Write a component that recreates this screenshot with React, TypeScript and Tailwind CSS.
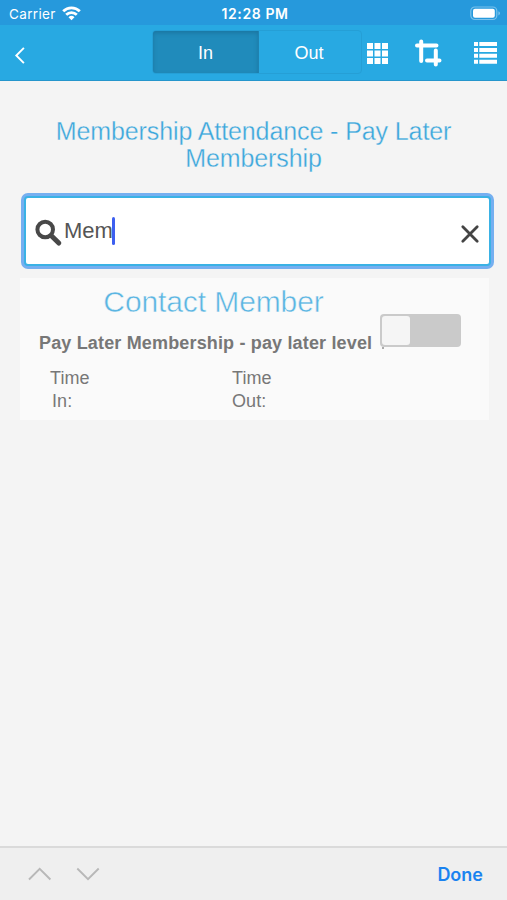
import type { ReactNode } from 'react'

function StatusBar() {
  return (
    <div className="grid h-[25px] grid-cols-3 items-center bg-[#2699dc] pr-[6px] pl-[9px] text-white">
      <div className="flex items-center gap-[6px] pt-[2px]">
        <span className="font-['Inter',sans-serif] text-[13.5px] leading-4 tracking-[0.35px]">Carrier</span>
        <svg width="19" height="15" viewBox="0 0 19 15" fill="none" stroke="currentColor" strokeWidth="2.8">
          <path d="M1.2 5.2a11.8 11.8 0 0 1 16.6 0" />
          <path d="M4.2 8.7a7.6 7.6 0 0 1 10.6 0" />
          <path d="M9.5 14.2 6.5 11.2a4.3 4.3 0 0 1 6 0z" fill="currentColor" stroke="none" />
        </svg>
      </div>
      <span className="pt-[2px] text-center font-['Inter',sans-serif] text-[14px] leading-4 font-semibold tracking-[0.6px] whitespace-nowrap">
        12:28 PM
      </span>
      <div className="flex justify-end pt-[1px]">
        <svg width="31" height="15" viewBox="0 0 31 15" fill="none">
          <rect x="0.8" y="1" width="26" height="12.5" rx="4" stroke="#79c2ec" strokeWidth="1.2" />
          <rect x="3" y="2.8" width="21.8" height="9" rx="2" fill="#fff" />
          <path d="M28.4 5.2v4.2q1.6-.6 1.6-2.1t-1.6-2.1z" fill="#79c2ec" />
        </svg>
      </div>
    </div>
  )
}

function IconButton({ label, children }: { label: string; children: ReactNode }) {
  return (
    <button aria-label={label} className="flex h-7 items-center justify-center">
      {children}
    </button>
  )
}

function Header() {
  return (
    <header className="flex h-[56px] items-start border-b border-[#2596cc] bg-[#28a9e2] pl-[14px] text-white">
      <button aria-label="Back" className="mt-[21px] w-[138px]">
        <svg width="11" height="19" viewBox="0 0 11 19" fill="none" stroke="currentColor" strokeWidth="1.9">
          <path d="M9.9 1.8 2.3 9.5l7.6 7.7" />
        </svg>
      </button>
      <div className="mt-[5px] flex h-[44px] w-[210px] overflow-hidden rounded-[4px] border border-[#259fd6] text-[18px]">
        <button className="w-[106px] border-r border-[#1e82b1] bg-[#208bbb] pt-[3px] shadow-[inset_0_2px_4px_#1b75a1]">In</button>
        <button className="flex-1 pt-[3px] pr-[2px]">Out</button>
      </div>
      <div className="mt-[14px] ml-[5px] flex flex-1 items-center">
        <IconButton label="Grid">
          <svg width="21" height="21" viewBox="0 0 21 21" fill="currentColor">
            <path d="M0 0h6v6H0zM7.5 0h6v6h-6zM15 0h6v6h-6zM0 7.5h6v6H0zM7.5 7.5h6v6h-6zM15 7.5h6v6h-6zM0 15h6v6H0zM7.5 15h6v6h-6zM15 15h6v6h-6z" />
          </svg>
        </IconButton>
        <div className="ml-[27px]">
          <IconButton label="Crop">
            <svg width="27" height="28" viewBox="0 0 27 28" fill="none" stroke="currentColor" strokeWidth="4" strokeLinecap="round">
              <path d="M2 6.4h19.5M6.2 2.5v19.5M12 21.5h12.5M20.8 11.5v14" />
            </svg>
          </IconButton>
        </div>
        <div className="ml-[32px]">
          <IconButton label="List">
            <svg width="23" height="22" viewBox="0 0 23 22" fill="currentColor">
              <path d="M0 0h4v4H0zM5.3 0H23v4H5.3zM0 5.9h4v4H0zM5.3 5.9H23v4H5.3zM0 11.8h4v4H0zM5.3 11.8H23v4H5.3zM0 17.7h4v4H0zM5.3 17.7H23v4H5.3z" />
            </svg>
          </IconButton>
        </div>
      </div>
    </header>
  )
}

function SearchField() {
  return (
    <div className="mt-[21px] mr-[13px] ml-[21px] flex h-[76px] items-center rounded-[7px] border-[3px] border-[#75aff0] bg-[#3ab2e5] p-[2px]">
      <div className="flex h-full w-full items-center rounded-[2px] bg-white pr-[9px] pl-[9px]">
        <svg width="28" height="28" viewBox="0 0 28 28" fill="none" stroke="#484848" className="mt-[3px]">
          <circle cx="10.2" cy="10.5" r="7.8" strokeWidth="4" />
          <path d="m16.6 17 7.2 7" strokeWidth="5" strokeLinecap="round" />
        </svg>
        <span className="ml-[1px] text-[22px] leading-7 text-[#555]">Mem</span>
        <span className="-ml-[1px] h-[28px] w-[3px] rounded-full bg-[#3d5ff0]" />
        <svg width="20" height="20" viewBox="0 0 20 20" className="mt-[5px] ml-auto" stroke="#444" strokeWidth="2.8" strokeLinecap="round">
          <path d="m2.8 2.8 14.4 14.4M17.2 2.8 2.8 17.2" />
        </svg>
      </div>
    </div>
  )
}

function MemberCard() {
  return (
    <section className="mt-[9px] mr-[18px] ml-[20px] flex h-[142px] bg-[#fafafa] text-[#777]">
      <div className="w-[360px] shrink-0 pt-[6px]">
        <h2 className="pl-[27px] text-center text-[30px] leading-9 font-light tracking-[-0.1px] whitespace-nowrap text-[#5bb5e2] [-webkit-text-stroke:0.5px_#fafafa]">
          Contact Member
        </h2>
        <p className="mt-[12px] ml-[19px] text-[18px] leading-[23px] font-bold tracking-[0.16px] whitespace-nowrap">
          Pay Later Membership - pay later level
        </p>
        <div className="mt-[12px] flex text-[18px] leading-[23px] tracking-[0.1px]">
          <div className="w-[182px] pl-[30px]">
            Time
            <div className="pl-[2px]">In:</div>
          </div>
          <div className="pl-[30px]">
            Time
            <div>Out:</div>
          </div>
        </div>
      </div>
      <div className="pt-[36px]">
        <button role="switch" aria-checked="false" aria-label="Attendance" className="block h-[33px] w-[81px] rounded-[4px] bg-[#cacaca] p-[2px]">
          <span className="block h-[29px] w-[28px] rounded-[3px] bg-[#f5f5f5]" />
        </button>
        <div className="ml-[2px] h-[2px] w-[2px] bg-[#aaa]" />
      </div>
    </section>
  )
}

function KeyboardBar() {
  return (
    <footer className="mt-auto flex h-[54px] items-center border-t-2 border-[#dadada] bg-[#efefef] pr-[24px] pl-[28px]">
      <svg width="72" height="14" viewBox="0 0 72 14" fill="none" stroke="#b8b8b8" strokeWidth="1.9">
        <path d="M1 12.5 11.7 1.8l10.7 10.7M49.3 1.5 60 12.2 70.7 1.5" />
      </svg>
      <button className="ml-auto font-['Inter',sans-serif] text-[18px] font-semibold text-[#1a83f0]">Done</button>
    </footer>
  )
}

export default function App() {
  return (
    <div className="flex h-[900px] w-[507px] flex-col overflow-hidden bg-[#f4f4f4] font-['Liberation_Sans',Arial,sans-serif]">
      <StatusBar />
      <Header />
      <h1 className="mt-[37px] text-center text-[25px] leading-[27px] font-light tracking-[-0.1px] whitespace-nowrap text-[#3ca7dc] [-webkit-text-stroke:0.3px_#f4f4f4]">
        Membership Attendance - Pay Later
        <br />
        Membership
      </h1>
      <SearchField />
      <MemberCard />
      <KeyboardBar />
    </div>
  )
}
